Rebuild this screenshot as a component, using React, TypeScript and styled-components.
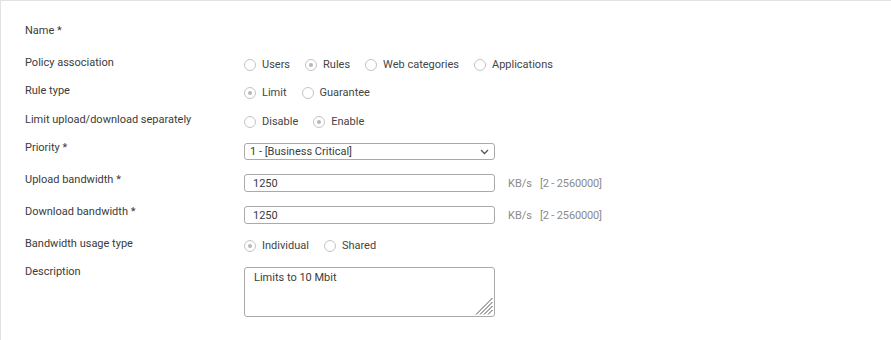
import React from "react";
import styled, { createGlobalStyle } from "styled-components";

const Global = createGlobalStyle`
  html, body { margin: 0; padding: 0; background: #ffffff; }
  body { font-family: Roboto, "Liberation Sans", Arial, sans-serif; }
  * { box-sizing: border-box; }
`;

const Panel = styled.div`
  width: 891px;
  height: 340px;
  border-top: 1px solid #e2e2e2;
  border-left: 1px solid #e2e2e2;
  background: #ffffff;
  padding: 23px 0 0 24px;
  overflow: hidden;
`;

const Form = styled.div`
  display: flex;
  flex-direction: column;
`;

const Row = styled.div<{ $h?: number }>`
  display: flex;
  align-items: flex-start;
  height: ${(p) => (p.$h ? `${p.$h}px` : "auto")};
`;

const Label = styled.div`
  width: 219px;
  flex: 0 0 219px;
  font-size: 11px;
  line-height: 14px;
  color: #3b3b3b;
`;

const Control = styled.div<{ $top?: number }>`
  display: flex;
  align-items: center;
  padding-top: ${(p) => p.$top ?? 0}px;
`;

const RadioGroup = styled.div`
  display: flex;
  align-items: center;
  gap: 15px;
  padding-top: 2px;
  height: 14px;
  box-sizing: content-box;
`;

const RadioOption = styled.label`
  display: flex;
  align-items: center;
  gap: 6px;
  font-size: 11px;
  line-height: 14px;
  color: #444444;
`;

const RadioCircle = styled.span<{ $checked?: boolean }>`
  width: 12px;
  height: 12px;
  border-radius: 50%;
  border: 1px solid #c4c4c4;
  background: #ffffff;
  display: inline-flex;
  align-items: center;
  justify-content: center;
  flex: 0 0 auto;
  &::after {
    content: "";
    width: 4px;
    height: 4px;
    border-radius: 50%;
    background: ${(p) => (p.$checked ? "#b8b8b8" : "transparent")};
  }
`;

const SelectBox = styled.div`
  width: 251px;
  height: 17px;
  border: 1px solid #aaaaaa;
  border-radius: 3px;
  display: flex;
  align-items: center;
  justify-content: space-between;
  padding: 0 5px 0 5px;
  font-size: 11px;
  color: #3b3b3b;
`;

const TextInput = styled.input`
  width: 251px;
  height: 18px;
  border: 1px solid #aaaaaa;
  border-radius: 3px;
  padding: 0 8px;
  font-family: Roboto, "Liberation Sans", Arial, sans-serif;
  font-size: 11px;
  color: #3b3b3b;
  outline: none;
  background: #ffffff;
`;

const Unit = styled.span`
  font-size: 11px;
  color: #8a8a8a;
  margin-left: 13px;
`;

const Range = styled.span`
  font-size: 11px;
  color: #8a8a8a;
  margin-left: 8px;
  letter-spacing: -0.15px;
`;

const AreaWrap = styled.div`
  position: relative;
  width: 251px;
  height: 50px;
`;

const TextArea = styled.textarea`
  width: 251px;
  height: 50px;
  border: 1px solid #aaaaaa;
  border-radius: 3px;
  padding: 3px 9px;
  font-family: Roboto, "Liberation Sans", Arial, sans-serif;
  font-size: 11px;
  line-height: 14px;
  color: #3b3b3b;
  outline: none;
  resize: none;
  display: block;
`;

const Grip = styled.svg`
  position: absolute;
  right: 2px;
  bottom: 2px;
  pointer-events: none;
`;

type Opt = { label: string; checked?: boolean };

const Radios: React.FC<{ options: Opt[] }> = ({ options }) => (
  <RadioGroup>
    {options.map((o) => (
      <RadioOption key={o.label}>
        <RadioCircle $checked={o.checked} />
        {o.label}
      </RadioOption>
    ))}
  </RadioGroup>
);

const Chevron = () => (
  <svg width="9" height="6" viewBox="0 0 9 6">
    <path d="M1 1 L4.5 4.5 L8 1" fill="none" stroke="#555" strokeWidth="1.3" />
  </svg>
);

const ResizeGrip = () => (
  <Grip width="18" height="18" viewBox="0 0 18 18">
    <g stroke="#555" strokeWidth="1">
      <line x1="1" y1="17.5" x2="17.5" y2="1" />
      <line x1="5" y1="17.5" x2="17.5" y2="5" />
      <line x1="9" y1="17.5" x2="17.5" y2="9" />
      <line x1="13" y1="17.5" x2="17.5" y2="13" />
    </g>
  </Grip>
);

export default function App() {
  return (
    <>
      <Global />
      <Panel>
        <Form>
          <Row $h={32}>
            <Label>Name *</Label>
          </Row>
          <Row $h={28}>
            <Label>Policy association</Label>
            <Radios
              options={[
                { label: "Users" },
                { label: "Rules", checked: true },
                { label: "Web categories" },
                { label: "Applications" },
              ]}
            />
          </Row>
          <Row $h={29}>
            <Label>Rule type</Label>
            <Radios options={[{ label: "Limit", checked: true }, { label: "Guarantee" }]} />
          </Row>
          <Row $h={28}>
            <Label>Limit upload/download separately</Label>
            <Radios options={[{ label: "Disable" }, { label: "Enable", checked: true }]} />
          </Row>
          <Row $h={32}>
            <Label>Priority *</Label>
            <Control $top={2}>
              <SelectBox>
                <span>1 - [Business Critical]</span>
                <Chevron />
              </SelectBox>
            </Control>
          </Row>
          <Row $h={32}>
            <Label>Upload bandwidth *</Label>
            <Control $top={1}>
              <TextInput defaultValue="1250" />
              <Unit>KB/s</Unit>
              <Range>[2 - 2560000]</Range>
            </Control>
          </Row>
          <Row $h={32}>
            <Label>Download bandwidth *</Label>
            <Control $top={1}>
              <TextInput defaultValue="1250" />
              <Unit>KB/s</Unit>
              <Range>[2 - 2560000]</Range>
            </Control>
          </Row>
          <Row $h={28}>
            <Label>Bandwidth usage type</Label>
            <Radios options={[{ label: "Individual", checked: true }, { label: "Shared" }]} />
          </Row>
          <Row>
            <Label>Description</Label>
            <Control $top={2}>
              <AreaWrap>
                <TextArea defaultValue="Limits to 10 Mbit" />
                <ResizeGrip />
              </AreaWrap>
            </Control>
          </Row>
        </Form>
      </Panel>
    </>
  );
}
